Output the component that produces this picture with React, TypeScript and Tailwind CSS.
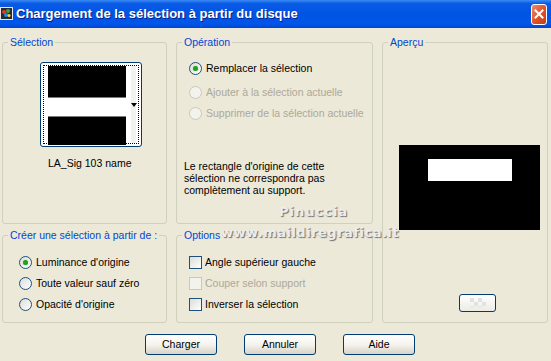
import React, { FC } from "react";

const font = "font-['Liberation_Sans',Arial,sans-serif]";

type RadioProps = { label: string; checked?: boolean; disabled?: boolean; className?: string };

const Radio: FC<RadioProps> = ({ label, checked, disabled, className = "" }) => (
	<div className={`flex items-center h-[13px] gap-[4px] ${className}`}>
		<span
			className={`w-[13px] h-[13px] shrink-0 rounded-full border flex items-center justify-center ${
				disabled
					? "border-[#CAC8BB] bg-[#F3F2EC]"
					: "border-[#1C5180] bg-linear-to-br from-[#DCDCD7] to-white"
			}`}
		>
			{checked && <span className="w-[5px] h-[5px] rounded-full bg-[#21A121] shadow-[0_0_1px_#5FD05F]" />}
		</span>
		<span className={`leading-[13px] whitespace-nowrap ${disabled ? "text-[#ACA899]" : "text-black"}`}>{label}</span>
	</div>
);

const Check: FC<RadioProps> = ({ label, disabled, className = "" }) => (
	<div className={`flex items-center h-[13px] gap-[3px] ${className}`}>
		<span
			className={`w-[13px] h-[13px] shrink-0 border ${
				disabled
					? "border-[#CAC8BB] bg-[#F3F2EC]"
					: "border-[#1C5180] bg-linear-to-br from-[#DCDCD7] to-white"
			}`}
		/>
		<span className={`leading-[13px] whitespace-nowrap ${disabled ? "text-[#ACA899]" : "text-black"}`}>{label}</span>
	</div>
);

const Group: FC<{ title: string; className?: string; children?: React.ReactNode }> = ({ title, className = "", children }) => (
	<fieldset className={`border border-[#D0D0BF] rounded-[3px] min-w-0 ${className}`}>
		<legend className="ml-[5px] px-[2px] leading-[13px] whitespace-nowrap text-[#0046D5]">{title}</legend>
		{children}
	</fieldset>
);

const XpButton: FC<{ text: string }> = ({ text }) => (
	<button className="w-[72px] h-[21px] border border-[#003C74] rounded-[3px] bg-linear-to-b from-white via-[#F4F3EE] to-[#D8D3C6] text-black text-[10.5px] leading-[13px]">
		{text}
	</button>
);

const App: FC = () => {
	return (
		<div className={`relative w-[551px] h-[361px] overflow-hidden bg-[#ECE9D8] text-[10.5px] ${font}`}>
			{/* title bar */}
			<div className="h-[28px] flex items-center bg-[linear-gradient(180deg,#3C8CF3_0%,#0A5BE6_12%,#0054E3_50%,#0056EA_85%,#0045CE_100%)]">
				<svg width="14" height="14" viewBox="0 0 14 14" className="shrink-0">
					<rect x="0.5" y="0.5" width="12" height="12" fill="#2A2A2A" stroke="#E8E8E8" />
					<circle cx="4" cy="5" r="2" fill="#E53935" />
					<circle cx="8" cy="4" r="2" fill="#43A047" />
					<circle cx="6" cy="8" r="2" fill="#1E88E5" />
					<circle cx="9" cy="8.5" r="1.5" fill="#FDD835" />
				</svg>
				<span className="ml-[2px] text-white font-bold text-[13px] leading-[16px] [text-shadow:1px_1px_#0A1E8C]">
					Chargement de la sélection à partir du disque
				</span>
				<div className="ml-auto mr-[4px] w-[16px] h-[21px] rounded-[3px] border border-white bg-linear-to-br from-[#EE8A66] via-[#E0552C] to-[#C63A16] flex items-center justify-center">
					<svg width="10" height="10" viewBox="0 0 10 10">
						<path d="M1.5 1.5 L8.5 8.5 M8.5 1.5 L1.5 8.5" stroke="white" strokeWidth="2" strokeLinecap="square" />
					</svg>
				</div>
			</div>

			{/* watermark (sits under the preview) */}
			<div className="absolute left-[279px] top-[204px] font-['DejaVu_Sans',sans-serif] font-bold text-[13px] leading-[16px] tracking-[1px] text-[#EDEDED] [text-shadow:1px_1px_1px_#6E6E6E]">
				Pinuccia
			</div>
			<div className="absolute left-[221px] top-[225px] whitespace-nowrap font-['DejaVu_Sans',sans-serif] font-bold text-[13px] leading-[16px] tracking-[0.5px] text-[#EDEDED] [text-shadow:1px_1px_1px_#6E6E6E]">
				www.maildiregrafica.it
			</div>

			{/* body */}
			<div className="pt-[8px] pl-[2px]">
				<div className="grid grid-cols-[165px_197px_166px] grid-rows-[188px_94px] gap-x-[9px] gap-y-[5px]">
					<Group title="Sélection">
						<div className="ml-[37px] mt-[13px] w-[102px] h-[85px] border border-[#003C74] rounded-[3px] bg-white p-[2px]">
							<div className="h-full border border-dotted border-black flex">
								<div className="ml-[4px] w-[78px] h-[79px] flex flex-col">
									<div className="h-[31px] bg-black" />
									<div className="h-[1px] bg-[#7A7A7A]" />
									<div className="h-[18px] bg-white" />
									<div className="h-[1px] bg-[#7A7A7A]" />
									<div className="flex-1 bg-black" />
								</div>
								<div className="ml-[5px] w-[5px] h-[77px] bg-[#F2F2F2] flex items-center justify-center">
									<span className="w-0 h-0 border-l-[3px] border-r-[3px] border-t-[4px] border-l-transparent border-r-transparent border-t-black" />
								</div>
							</div>
						</div>
						<div className="mt-[10px] ml-[45px] leading-[13px] text-black">LA_Sig 103 name</div>
					</Group>

					<Group title="Opération">
						<div className="pl-[12px] mt-[13px]">
							<Radio label="Remplacer la sélection" checked />
							<Radio label="Ajouter à la sélection actuelle" disabled className="mt-[11px]" />
							<Radio label="Supprimer de la sélection actuelle" disabled className="mt-[8px]" />
						</div>
						<p className="ml-[7px] mt-[40px] leading-[12px] text-black">
							Le rectangle d'origine de cette
							<br />
							sélection ne correspondra pas
							<br />
							complètement au support.
						</p>
					</Group>

					<Group title="Aperçu" className="row-span-2 relative z-10">
						<div className="ml-[16px] mt-[96px] w-[141px] h-[85px] bg-black pt-[14px] pl-[29px]">
							<div className="w-[84px] h-[22px] bg-white" />
						</div>
						<div className="ml-[76px] mt-[64px] w-[37px] h-[18px] border border-[#003C74] rounded-[3px] bg-linear-to-b from-white to-[#ECEBE4] flex items-center justify-center">
							<svg width="24" height="10" viewBox="0 0 24 10">
								<rect x="4" y="0" width="4" height="4" fill="#E2E2E2" />
								<rect x="12" y="0" width="4" height="4" fill="#E2E2E2" />
								<rect x="8" y="4" width="4" height="4" fill="#E2E2E2" />
								<rect x="16" y="4" width="4" height="4" fill="#E2E2E2" />
								<rect x="4" y="8" width="4" height="2" fill="#E8E8E8" />
								<rect x="12" y="8" width="4" height="2" fill="#E8E8E8" />
							</svg>
						</div>
					</Group>

					<Group title="Créer une sélection à partir de :">
						<div className="pl-[16px] mt-[14px]">
							<Radio label="Luminance d'origine" checked />
							<Radio label="Toute valeur sauf zéro" className="mt-[8px]" />
							<Radio label="Opacité d'origine" className="mt-[8px]" />
						</div>
					</Group>

					<Group title="Options">
						<div className="pl-[12px] mt-[14px]">
							<Check label="Angle supérieur gauche" />
							<Check label="Couper selon support" disabled className="mt-[8px]" />
							<Check label="Inverser la sélection" className="mt-[8px]" />
						</div>
					</Group>
				</div>

				<div className="mt-[11px] ml-[143px] flex gap-[27px]">
					<XpButton text="Charger" />
					<XpButton text="Annuler" />
					<XpButton text="Aide" />
				</div>
			</div>
		</div>
	);
};

export default App;
